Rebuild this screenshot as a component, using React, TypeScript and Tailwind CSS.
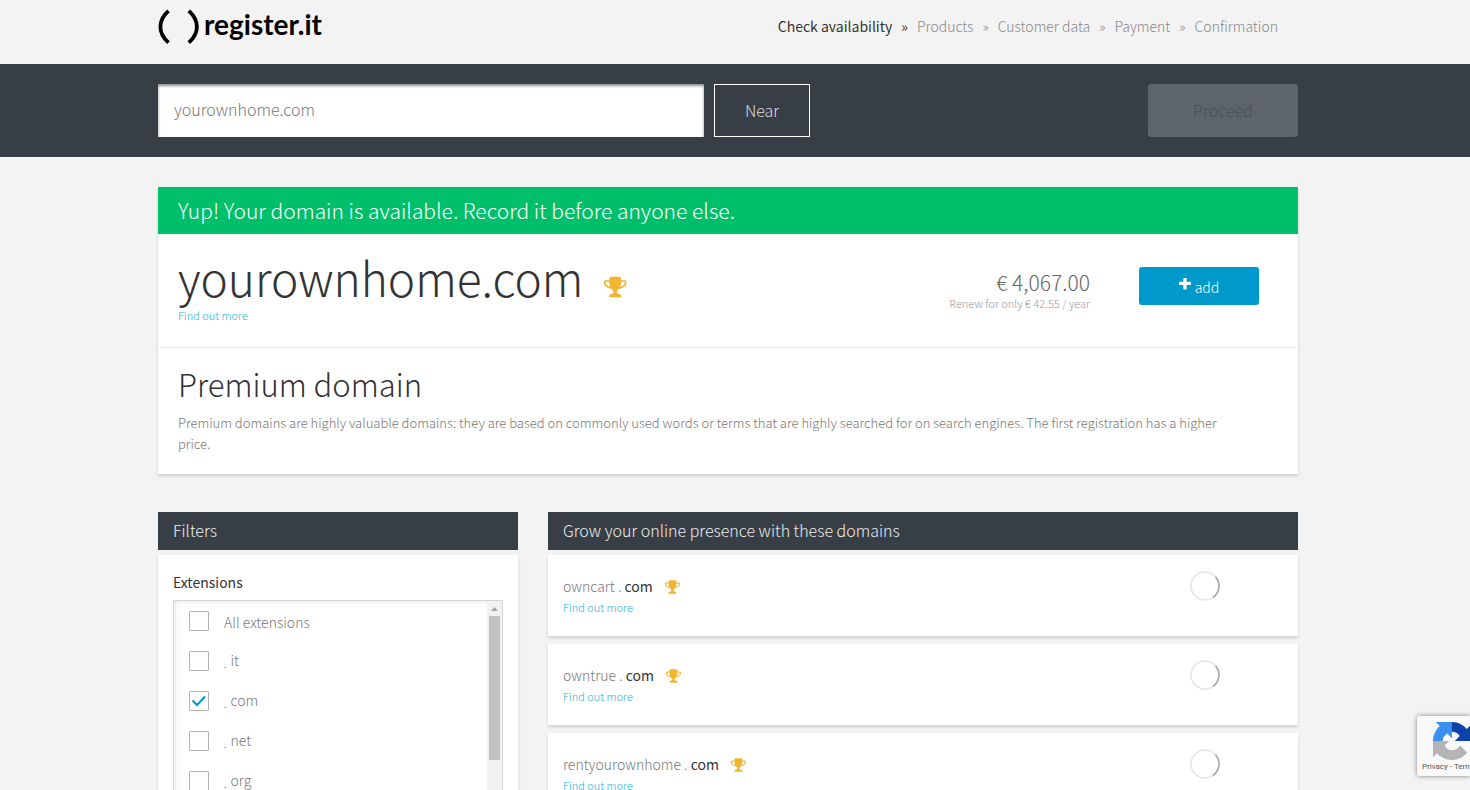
import { useState } from "react";

const steps = ["Check availability", "Products", "Customer data", "Payment", "Confirmation"];

const suggestions = ["owncart", "owntrue", "rentyourownhome"];

const extensions = ["it", "com", "net", "org"];

function Trophy({ className }: { className: string }) {
  return (
    <svg viewBox="0 0 1792 1792" fill="#f2b531" className={className} aria-hidden="true">
      <path d="M458 883q-74-162-74-371h-256v96q0 78 94.5 162t235.5 113zm1078-275v-96h-256q0 209-74 371 141-29 235.5-113t94.5-162zm128-128v128q0 71-41.5 143t-112 130-173 97.5-215.5 44.5q-42 54-95 95-38 34-52.5 72.5t-14.5 89.5q0 54 30.5 91t97.5 37q75 0 133.5 45.5t58.5 114.5v64q0 14-9 23t-23 9h-832q-14 0-23-9t-9-23v-64q0-69 58.5-114.5t133.5-45.5q67 0 97.5-37t30.5-91q0-51-14.5-89.5t-52.5-72.5q-53-41-95-95-113-5-215.5-44.5t-173-97.5-112-130-41.5-143v-128q0-40 28-68t68-28h288v-96q0-66 47-113t113-47h576q66 0 113 47t47 113v96h288q40 0 68 28t28 68z" />
    </svg>
  );
}

function Spinner() {
  return (
    <svg viewBox="0 0 30 30" className="size-[30px]" fill="none" aria-hidden="true">
      <circle cx="15" cy="15" r="14" stroke="#e6e6e6" strokeWidth="1.6" />
      <path d="M25.5 5.8A14 14 0 0 1 23 26.5" stroke="#a9a9a9" strokeWidth="1.6" />
    </svg>
  );
}

function Logo() {
  return (
    <a href="#" className="flex items-start" aria-label="register.it">
      <svg viewBox="0 0 42 36" className="h-9 w-[42px]" fill="none" stroke="#000" strokeWidth="3.8">
        <path d="M10.5 1.8C-.3 11.5-.3 24 10.5 33.7" />
        <path d="M30.8 1.8C41.6 11.5 41.6 24 30.8 33.7" />
      </svg>
      <span className="pl-1 font-['Lato'] text-[28px] leading-[30px] font-bold text-black">register.it</span>
    </a>
  );
}

function Checkbox({ label, checked, onChange }: { label: string; checked: boolean; onChange: () => void }) {
  const all = label === "All extensions";
  return (
    <label className="flex h-5 items-center gap-[15px] text-[#777]">
      <span className="grid size-5 shrink-0">
        <input
          type="checkbox"
          checked={checked}
          onChange={onChange}
          className="col-start-1 row-start-1 size-5 appearance-none rounded-[1px] border border-[#b5b5b5] bg-white"
        />
        {checked && (
          <svg
            viewBox="0 0 20 20"
            className="pointer-events-none col-start-1 row-start-1 size-5"
            fill="none"
            stroke="#0099cc"
            strokeWidth="2"
          >
            <path d="M3.5 9.5L8 14L16 5.5" />
          </svg>
        )}
      </span>
      {all ? (
        <span className="pt-[2px]">{label}</span>
      ) : (
        <span className="flex items-center gap-1 pb-[2px]">
          <span className="pt-[6px] text-[10px] text-[#333]">.</span>
          <span>{label}</span>
        </span>
      )}
    </label>
  );
}

export default function App() {
  const [domain, setDomain] = useState("yourownhome.com");
  const [selected, setSelected] = useState<string[]>(["com"]);

  const toggle = (ext: string) =>
    setSelected((prev) => (prev.includes(ext) ? prev.filter((e) => e !== ext) : [...prev, ext]));

  return (
    <div className="min-h-screen bg-[#f3f3f3] font-['Noto_Sans_CJK_JP',sans-serif] text-[14px] leading-[21px] font-light text-[#777]">
      {/* Header */}
      <header className="pr-[14px]">
        <div className="mx-auto flex h-16 max-w-[1140px] items-start justify-between pt-[9px]">
          <Logo />
          <ol className="flex pt-[7px] pr-5">
            {steps.map((step, i) => (
              <li key={step} className={i === 0 ? "flex font-normal text-[#333]" : "flex text-[#888]"}>
                {step}
                {i < steps.length - 1 && <span className="px-[9px]">»</span>}
              </li>
            ))}
          </ol>
        </div>
      </header>

      {/* Search bar */}
      <section className="bg-[#373e46] py-5 pr-[14px]">
        <form className="mx-auto flex max-w-[1140px] text-[16px]" onSubmit={(e) => e.preventDefault()}>
          <input
            aria-label="Domain"
            value={domain}
            onChange={(e) => setDomain(e.target.value)}
            className="h-[53px] w-[546px] bg-white px-4 pb-1 font-light text-[#777] shadow-[inset_0_2px_3px_rgba(0,0,0,0.45)] outline-none"
          />
          <button type="button" className="ml-[10px] h-[53px] w-24 border border-white font-light text-[#ddd]">
            Near
          </button>
          <button type="button" className="ml-auto h-[53px] w-[150px] rounded-[3px] bg-[#5d646a] font-light text-[#485056]">
            Proceed
          </button>
        </form>
      </section>

      <main className="pr-[14px]">
        <div className="mx-auto max-w-[1140px] pt-[30px]">
          {/* Availability result */}
          <section className="bg-white shadow-[0_2px_3px_rgba(0,0,0,0.15)]">
            <h2 className="bg-[#00bf6a] px-5 py-2 text-[21px] leading-[31px] text-white">
              Yup! Your domain is available. Record it before anyone else.
            </h2>
            <div className="flex h-[114px] items-start border-b border-[#eee] px-5 pt-4">
              <div className="flex-1">
                <div className="flex items-center gap-[21px]">
                  <h1 className="text-[46px] leading-[54px] text-[#333]">{domain}</h1>
                  <Trophy className="mt-5 size-6" />
                </div>
                <a href="#" className="block pt-[1px] text-[11px] leading-[20px] text-[#1ab0d5]">
                  Find out more
                </a>
              </div>
              <div className="pt-[18px] text-right">
                <p className="text-[21px] leading-[28px] text-[#666]">€ 4,067.00</p>
                <p className="text-[11px] leading-[14px] text-[#999]">Renew for only € 42.55 / year</p>
              </div>
              <button
                type="button"
                className="mt-[17px] mr-[19px] ml-[49px] flex h-[38px] w-[120px] items-center justify-center gap-1 rounded-[3px] bg-[#0099cc] text-white"
              >
                <svg viewBox="0 0 1408 1408" className="mb-1 size-3" fill="currentColor" aria-hidden="true">
                  <path d="M1408 544v192q0 40-28 68t-68 28h-416v416q0 40-28 68t-68 28h-192q-40 0-68-28t-28-68v-416h-416q-40 0-68-28t-28-68v-192q0-40 28-68t68-28h416v-416q0-40 28-68t68-28h192q40 0 68 28t28 68v416h416q40 0 68 28t28 68z" />
                </svg>
                <span className="pt-[2px]">add</span>
              </button>
            </div>
            <div className="px-5 pt-[18px] pb-5">
              <h2 className="text-[31px] leading-[36px] text-[#333]">Premium domain</h2>
              <p className="max-w-[1060px] pt-[10px] text-[13px]">
                Premium domains are highly valuable domains: they are based on commonly used words or terms that are
                highly searched for on search engines. The first registration has a higher price.
              </p>
            </div>
          </section>

          <div className="grid grid-cols-3 gap-[30px] pt-[38px]">
            {/* Filters */}
            <aside>
              <h3 className="bg-[#373e46] px-[15px] pb-[2px] text-[16px] leading-[36px] text-[#eee]">Filters</h3>
              <div className="mt-[5px] bg-white px-[15px] pt-[17px] pb-5 shadow-[0_2px_3px_rgba(0,0,0,0.15)]">
                <h4 className="font-normal text-[#333]">Extensions</h4>
                <div className="mt-[7px] flex h-[220px] justify-between overflow-hidden border border-[#d5d5d5] shadow-[inset_0_0_8px_rgba(0,0,0,0.1)]">
                  <div className="flex flex-col gap-5 px-[15px] pt-[10px]">
                    <Checkbox
                      label="All extensions"
                      checked={selected.includes("all")}
                      onChange={() => toggle("all")}
                    />
                    {extensions.map((ext) => (
                      <Checkbox
                        key={ext}
                        label={ext}
                        checked={selected.includes(ext)}
                        onChange={() => toggle(ext)}
                      />
                    ))}
                  </div>
                  {/* Scrollbar */}
                  <div className="flex w-[15px] flex-col items-center bg-[#f1f1f1]">
                    <svg viewBox="0 0 15 15" className="size-[15px]" fill="#a3a3a3" aria-hidden="true">
                      <path d="M4 10L7.5 6L11 10Z" />
                    </svg>
                    <div className="h-36 w-[11px] bg-[#c1c1c1]" />
                  </div>
                </div>
              </div>
            </aside>

            {/* Suggested domains */}
            <section className="col-span-2">
              <h3 className="bg-[#373e46] px-[15px] pb-[2px] text-[16px] leading-[36px] text-[#eee]">
                Grow your online presence with these domains
              </h3>
              <ul className="flex flex-col gap-2 pt-[5px]">
                {suggestions.map((name) => (
                  <li
                    key={name}
                    className="flex h-[81px] items-start justify-between bg-white pt-4 pr-[78px] pl-[15px] shadow-[0_2px_3px_rgba(0,0,0,0.15)]"
                  >
                    <div className="pt-[5px]">
                      <div className="flex items-center">
                        <span>
                          {name} . <span className="font-normal text-[#333]">com</span>
                        </span>
                        <Trophy className="ml-3 size-4" />
                      </div>
                      <a href="#" className="block text-[11px] leading-[20px] text-[#1ab0d5]">
                        Find out more
                      </a>
                    </div>
                    <Spinner />
                  </li>
                ))}
              </ul>
            </section>
          </div>
        </div>
      </main>

      {/* reCAPTCHA badge */}
      <div className="fixed right-0 bottom-[14px] w-[53px] rounded-l-[3px] shadow-[0_0_5px_gray]">
        <div className="h-[60px] overflow-hidden rounded-l-[3px] bg-[#f9f9f9] pt-[6px] font-['Roboto']">
          <svg viewBox="0 0 64 64" className="ml-4 size-[38px] max-w-none" aria-hidden="true">
            <path
              fill="#0d43ab"
              d="M64 31.955l-.033-1.37V4.687l-7.16 7.16C50.948 4.674 42.033.093 32.05.093c-10.4 0-19.622 4.96-25.458 12.64l11.736 11.86a15.55 15.55 0 0 1 4.754-5.334c2.05-1.6 4.952-2.906 8.968-2.906.485 0 .86.057 1.135.163 4.976.393 9.288 3.14 11.828 7.124l-8.307 8.307L64 31.953"
            />
            <path
              fill="#3b8ff0"
              d="M31.862.094l-1.37.033H4.594l7.16 7.16C4.58 13.147 0 22.06 0 32.046c0 10.4 4.96 19.622 12.64 25.458L24.5 45.768a15.55 15.55 0 0 1-5.334-4.754c-1.6-2.05-2.906-4.952-2.906-8.968 0-.485.057-.86.163-1.135.393-4.976 3.14-9.288 7.124-11.828l8.307 8.307L31.86.095"
            />
            <path
              fill="#b4b4b4"
              d="M.001 32.045l.033 1.37v25.898l7.16-7.16c5.86 7.173 14.774 11.754 24.76 11.754 10.4 0 19.622-4.96 25.458-12.64l-11.736-11.86a15.55 15.55 0 0 1-4.754 5.334c-2.05 1.6-4.952 2.906-8.968 2.906-.485 0-.86-.057-1.135-.163-4.976-.393-9.288-3.14-11.828-7.124l8.307-8.307c-10.522.04-22.4.066-27.295-.005"
            />
          </svg>
          <p className="pl-[5px] text-[8px] leading-[14px] font-normal whitespace-nowrap text-[#555]">
            <a href="#">Privacy</a> - <a href="#">Terms</a>
          </p>
        </div>
      </div>
    </div>
  );
}
